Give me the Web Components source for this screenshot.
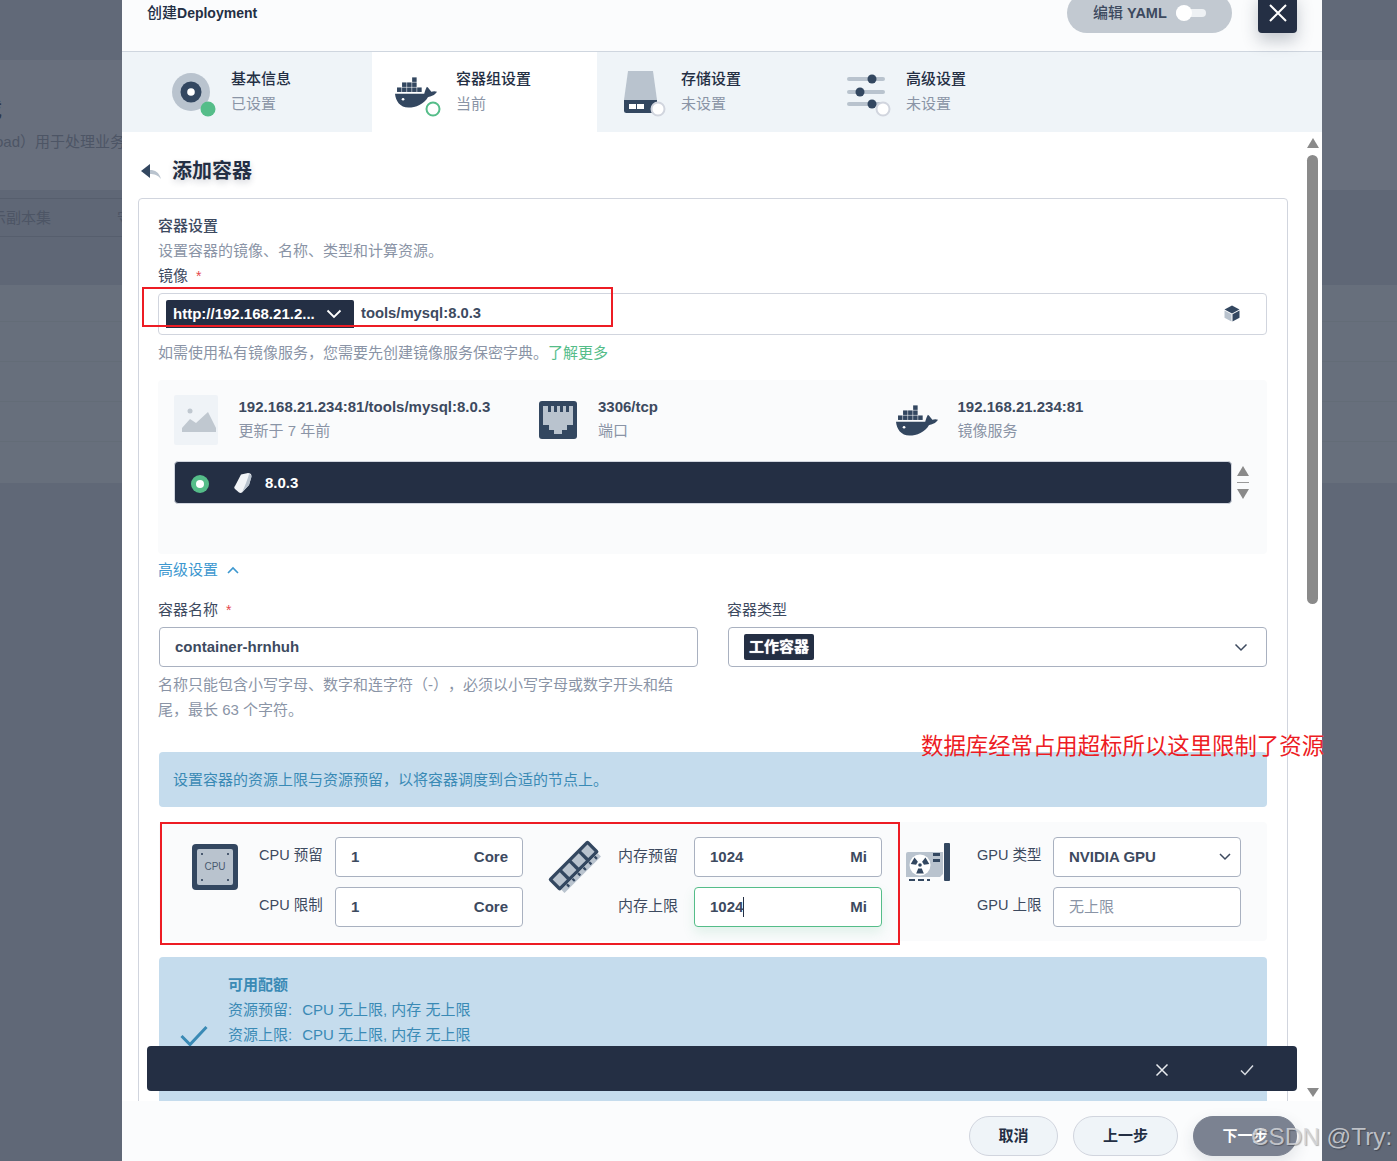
<!DOCTYPE html>
<html lang="zh"><head><meta charset="utf-8"><title>创建Deployment</title>
<style>
html,body{margin:0;padding:0;height:1161px;overflow:hidden;background:#606877}
body{font:15px/20px "Liberation Sans","Noto Sans CJK SC",sans-serif;color:#242f44;text-spacing-trim:space-all}
</style></head><body>
<x-app>
  <x-backdrop slot="left"></x-backdrop>
  <x-modal>
    <x-header slot="header" title="创建Deployment"></x-header>
    <x-steps slot="steps">
      <x-step icon="1" title="基本信息" sub="已设置"></x-step>
      <x-step icon="2" title="容器组设置" sub="当前" active></x-step>
      <x-step icon="3" title="存储设置" sub="未设置"></x-step>
      <x-step icon="4" title="高级设置" sub="未设置"></x-step>
    </x-steps>
    <x-back slot="title">添加容器</x-back>
    <x-card slot="card">
      <x-t k="strong">容器设置</x-t>
      <x-t k="help" style="margin-top:5px">设置容器的镜像、名称、类型和计算资源。</x-t>
      <x-label req style="margin-top:5px">镜像</x-label>
      <x-image-input registry="http://192.168.21.2..." value="tools/mysql:8.0.3" style="margin-top:7px"></x-image-input>
      <x-t k="help" style="margin-top:8px">如需使用私有镜像服务，您需要先创建镜像服务保密字典。<x-link>了解更多</x-link></x-t>
      <x-image-panel style="margin-top:17px"></x-image-panel>
      <x-adv style="margin-top:6px">高级设置</x-adv>
      <x-name-row style="margin-top:20px"></x-name-row>
      <x-notice style="margin-top:30px">设置容器的资源上限与资源预留，以将容器调度到合适的节点上。</x-notice>
      <x-res-panel style="margin-top:15px"></x-res-panel>
      <x-quota style="margin-top:16px"></x-quota>
    </x-card>
    <x-scrollbar slot="scroll"></x-scrollbar>
    <x-footer slot="footer"></x-footer>
    <x-toolbar slot="overlay"></x-toolbar>
  </x-modal>
  <x-note slot="over" style="left:142px;top:287px;width:467px;height:36px"></x-note>
  <x-note slot="over" style="left:160px;top:822px;width:736px;height:119px"></x-note>
  <x-red slot="over">数据库经常占用超标所以这里限制了资源</x-red>
  <x-mark slot="over">CSDN @Try:</x-mark>
</x-app>
<script>
const DARK='#334760',GREY='#b9c3ce',GREEN='#55bd89';
const def=(n,css,html)=>customElements.define(n,class extends HTMLElement{
  connectedCallback(){ if(this.shadowRoot) return;
    this.attachShadow({mode:'open'}).innerHTML=`<style>:host{display:block}${css}</style>`+(typeof html==='function'?html(this):html||'<slot></slot>');}
});
const whale=(x,y,w,h,c=DARK)=>{
  const box=(a,b)=>`<rect x="${a}" y="${b}" width="13.4" height="13.4"/>`;
  return `<svg x="${x}" y="${y}" width="${w}" height="${h}" viewBox="0 0 125 92" style="display:block" aria-hidden="true"><g fill="${c}">${box(51,1)}${box(21,16)}${box(36,16)}${box(51,16)}${box(6,31)}${box(21,31)}${box(36,31)}${box(51,31)}${box(66,31)}<path d="M0 50H87C89 43 91 36 95 29C100 33 105 39 108 44C114 42 120 42 125 44C118 55 107 58 98 60C86 80 62 91 40 91C15 91 2 72 0 50Z"/></g><circle cx="24" cy="66" r="4" fill="#fff"/></svg>`;
};
const badge=(d)=>d==='done'?`<circle cx="41" cy="47" r="7.5" fill="${GREEN}"/>`:d==='cur'?`<circle cx="41" cy="47" r="6.5" fill="#fff" stroke="${GREEN}" stroke-width="2"/>`:`<circle cx="41" cy="47" r="6.5" fill="#fff" stroke="#d1d5de" stroke-width="2"/>`;
const stepIcons={
 1:`<circle cx="24" cy="30" r="19" fill="${GREY}"/><circle cx="24" cy="30" r="10.5" fill="${DARK}"/><circle cx="24" cy="30" r="3.8" fill="#fff"/>`+badge('done'),
 2:whale(3,15,42,31)+badge('cur'),
 3:`<path d="M11 9H36L40 38H7Z" fill="${GREY}"/><path d="M7 38H40V51H9.500Q7 51 7 48.500Z" fill="${DARK}"/><rect x="12" y="42" width="7" height="5" fill="#fff"/><rect x="20" y="42" width="7" height="5" fill="#fff"/>`+badge('off'),
 4:`<g fill="${GREY}"><rect x="5" y="15" width="38" height="4" rx="2"/><rect x="5" y="28" width="38" height="4" rx="2"/><rect x="5" y="40" width="38" height="4" rx="2"/></g><g fill="${DARK}"><circle cx="30" cy="17" r="4.500"/><circle cx="18" cy="30" r="4.500"/><circle cx="30" cy="42" r="4.500"/></g>`+badge('off')
};

def('x-app',`:host{display:grid;grid-template-columns:122px 1200px 75px;height:1161px;position:relative;overflow:hidden;
  background:linear-gradient(#616978 0 60px,#686f7d 60px 190px,#5f6776 190px 285px,#676f7c 285px 321px,#636c77 321px 322px,#676f7c 322px 361px,#636c77 361px 362px,#676f7c 362px 401px,#636c77 401px 402px,#676f7c 402px 441px,#636c77 441px 442px,#676f7c 442px 483px,#606877 483px)}`,
 `<slot name="left"></slot><slot></slot><div></div><slot name="over"></slot>`);
def('x-backdrop',`:host{height:1161px;overflow:hidden;color:#4d5565;white-space:nowrap}
 .big{height:24px;margin:98px 0 0 -20px;font-size:22px;line-height:24px;color:#2e3748;font-weight:500}
 .sub{display:flex;justify-content:flex-end;margin:10px -3px 0 0;height:20px}
 .tabs{margin-top:46px;height:37px;border-top:1px solid #565e6d;border-bottom:1px solid #565e6d;line-height:37px;display:flex;justify-content:space-between;overflow:hidden}
 .tabs span:first-child{margin-left:-9px}.tabs span:last-child{margin-right:-10px}`,
 `<div class="big">载</div><div class="sub"><span>oad）用于处理业务</span></div><div class="tabs"><span>示副本集</span><span>守</span></div>`);
def('x-modal',`:host{width:1200px;height:1161px;display:flex;flex-direction:column;position:relative;background:#fff}
 .body{height:969px;overflow:hidden;display:flex;flex:none}
 .main{width:1150px;padding:0 19px 0 16px;flex:none;overflow:hidden}
 .scroll{padding-top:6px}`,
 `<slot name="header"></slot><slot name="steps"></slot>
 <div class="body"><div class="main"><slot name="title"></slot><slot name="card"></slot></div><div class="scroll"><slot name="scroll"></slot></div></div>
 <slot name="footer"></slot><slot name="overlay"></slot>`);
def('x-header',`:host{height:51px;border-bottom:1px solid #cfd6df;background:#fbfcfd;display:flex;padding:0 25px;box-sizing:content-box;align-items:flex-end;justify-content:space-between;position:relative}
 .t{align-self:flex-start;font-size:14px;font-weight:700;line-height:20px;padding-top:3px;color:#242f44}
 .t b{font-size:15px;font-weight:500}
 .r{display:flex;gap:26px;align-items:flex-end;padding-bottom:18px}
 .y{height:40px;width:165px;box-sizing:border-box;border-radius:20px;background:#c2c9d1;display:flex;align-items:center;padding:0 26px;font-weight:700;font-size:14.500px;color:#3d4a5f;white-space:nowrap;gap:9px}
 .y b{font-size:15px;font-weight:500}
 .tg{width:30px;height:8px;border-radius:4px;background:#eef1f4;position:relative;flex:none}
 .tg::before{content:"";position:absolute;left:0;top:-4px;width:16px;height:16px;border-radius:50%;background:#fff}
 .c{width:39px;height:40px;background:#242f44;border-radius:0 0 4px 4px;display:flex;align-items:center;justify-content:center;box-shadow:0 8px 16px rgba(36,47,68,.25)}
 svg{display:block}`,
 h=>`<div class="t"><b>创建</b>Deployment</div><div class="r"><div class="y"><span><b>编辑</b> YAML</span><span class="tg"></span></div><div class="c"><svg width="18" height="18" viewBox="0 0 18 18"><path d="M1 1L17 17M17 1L1 17" stroke="#fff" stroke-width="2"/></svg></div></div>`);
def('x-steps',`:host{height:80px;background:#eff4f8;padding-left:25px;display:flex}`);
def('x-step',`:host{width:225px;height:80px;display:flex;padding-left:20px;box-sizing:border-box;flex:none}
 :host([active]){background:#fff}
 svg.i{margin-top:10px;flex:none}
 .x{padding:17px 0 0 14px;font-size:15px}
 .a{font-weight:500;line-height:20px;color:#242f44}.b{margin-top:5px;line-height:20px;color:#8a94a6}`,
 h=>`<svg class="i" width="50" height="60" viewBox="0 0 50 60" aria-hidden="true">${stepIcons[h.getAttribute('icon')]}</svg><div class="x"><div class="a">${h.getAttribute('title')}</div><div class="b">${h.getAttribute('sub')}</div></div>`);
def('x-back',`:host{height:66px;display:flex;align-items:center;padding:12px 0 0 3px;box-sizing:border-box;font-size:20px;font-weight:700;color:#242f44;text-shadow:0 3px 6px rgba(36,47,68,.2)}
 svg{margin-right:11px;display:block}`,
 `<svg width="20" height="17" viewBox="0 0 20 17" aria-hidden="true"><path d="M9 7C14 7 18 9 20 16C17 12 13 11 9 11Z" fill="${GREY}"/><path d="M0 8L9 1V15Z" fill="${DARK}"/></svg><slot></slot>`);
def('x-card',`:host{border:1px solid #d1d5de;border-radius:4px;padding:17px 20px 40px 19px;box-sizing:border-box;width:100%}`);
def('x-t',`:host{line-height:20px}:host([k=strong]){font-weight:500;color:#3d4a5f}:host([k=help]){color:#8a94a6}`);
def('x-link',`:host{display:inline;color:#55bd89}`);
def('x-label',`:host{line-height:20px;color:#3d4a5f}i{font-style:normal;color:#e5484d;margin-left:8px;font-size:14px}`,h=>`<slot></slot>${h.hasAttribute('req')?'<i>*</i>':''}`);
def('x-image-input',`:host{height:42px;box-sizing:border-box;border:1px solid #d1d5de;border-radius:4px;display:flex;align-items:flex-start;padding:6px 26px 0 7px;background:#fff}
 .s{width:188px;height:28px;background:#242f44;border-radius:2px 2px 0 0;color:#fff;font-weight:700;font-size:15px;display:flex;align-items:center;justify-content:space-between;padding:0 12px 0 7px;box-sizing:border-box;white-space:nowrap}
 .v{margin-left:7px;height:26px;line-height:26px;font-weight:700;font-size:14.800px;color:#3d4a5f;flex:1}
 svg{display:block;margin-top:5px}`,
 h=>`<div class="s"><span>${h.getAttribute('registry')}</span><svg style="margin:0" width="16" height="10" viewBox="0 0 16 10"><path d="M1.500 1.500L8 8L14.500 1.500" fill="none" stroke="#fff" stroke-width="1.800"/></svg></div><div class="v">${h.getAttribute('value')}</div>
 <svg width="16" height="17" viewBox="0 0 16 17" aria-hidden="true"><path d="M8 .5L15.500 4.500L8 8.500L.5 4.500Z" fill="${DARK}"/><path d="M.5 5.500L7.500 9.300V16.500L.5 12.700Z" fill="${GREY}"/><path d="M15.500 5.500L8.500 9.300V16.500L15.500 12.700Z" fill="${DARK}"/></svg>`);
def('x-image-panel',`:host{height:174px;box-sizing:border-box;background:#fafbfc;border-radius:4px;padding:15px 17px 0 16px}
 .row{display:grid;grid-template-columns:359.5px 359.5px 1fr;height:50px;margin-right:-17px}
 .c{display:flex;align-items:center;height:50px}
 .ic{width:64.500px;flex:none}
 .tx{padding-bottom:2px}
 .a{font-weight:700;font-size:15px;line-height:24px;color:#3d4a5f;white-space:nowrap}.b{line-height:24px;color:#8a94a6}
 .ph{width:44px;height:50px;background:#eff3f7;border-radius:2px;display:flex;align-items:center;justify-content:center}
 .ph svg{margin-left:6px;display:block}
 .bar{margin-top:16px;display:flex;gap:4px}
 .tag{flex:1;height:43px;border:1px solid #d1d5de;box-sizing:border-box;background:#242f44;border-radius:4px;color:#fff;font-weight:700;font-size:15px;display:flex;align-items:center;padding:2px 0 0 16px}
 .r{width:18px;height:18px;border-radius:50%;background:${GREEN};display:flex;align-items:center;justify-content:center;flex:none}
 .r::after{content:"";width:8px;height:8px;border-radius:50%;background:#fff}
 .tag svg{margin:-2px 13px 0 25px;display:block}
 .tag span:last-child{margin-top:-2px}
 .arr{width:14px;height:43px;flex:none;display:flex;flex-direction:column;align-items:center;padding-top:5px;box-sizing:border-box}
 .arr hr{width:12px;height:1px;border:0;background:#999;margin:6px 0}`,
 `<div class="row">
  <div class="c"><div class="ic"><div class="ph"><svg width="34" height="24" viewBox="0 0 34 24"><circle cx="8" cy="3" r="2.500" fill="#c0c8d0"/><path d="M0 24V20L8 11L14 15L26 4L34 20V24Z" fill="#c0c8d0"/></svg></div></div><div class="tx"><div class="a">192.168.21.234:81/tools/mysql:8.0.3</div><div class="b">更新于 7 年前</div></div></div>
  <div class="c"><div class="ic" style="padding-left:5.500px;box-sizing:border-box"><svg style="display:block" width="38" height="38" viewBox="0 0 38 38"><rect width="38" height="38" rx="3" fill="${DARK}"/><path d="M4 5H34V24H28V29H23V33H15V29H10V24H4Z" fill="${GREY}"/><g fill="${DARK}"><rect x="9" y="5" width="3" height="6"/><rect x="15" y="5" width="3" height="6"/><rect x="21" y="5" width="3" height="6"/><rect x="27" y="5" width="3" height="6"/></g></svg></div><div class="tx"><div class="a">3306/tcp</div><div class="b">端口</div></div></div>
  <div class="c"><div class="ic" style="padding-left:3px;box-sizing:border-box">${whale(0,0,42,31)}</div><div class="tx"><div class="a">192.168.21.234:81</div><div class="b">镜像服务</div></div></div>
 </div>
 <div class="bar"><div class="tag"><span class="r"></span><svg width="18" height="20" viewBox="0 0 18 20"><path d="M7 1.500L14 0C16 0 17.500 1 17.500 3L15 12L8 19.500C7 20 6 20 5 19.500L1 16C0 15 0 14 1 13Z" fill="#f2f4f7"/><path d="M15 1C17 2 17.500 3 17.500 4L15 12L8 19.500C10 15 14 6 15 1Z" fill="#b9c3ce"/></svg><span>8.0.3</span></div>
 <div class="arr"><svg width="12" height="10" viewBox="0 0 12 10"><path d="M6 0L12 10H0Z" fill="#8a8a8a"/></svg><hr><svg width="12" height="10" viewBox="0 0 12 10"><path d="M0 0H12L6 10Z" fill="#8a8a8a"/></svg></div></div>`);
def('x-adv',`:host{height:20px;display:flex;align-items:center;color:#3c97cf;gap:8px}`,`<slot></slot><svg width="14" height="8" viewBox="0 0 14 8"><path d="M2 7L7 2L12 7" fill="none" stroke="#3c97cf" stroke-width="1.600"/></svg>`);
def('x-box',`:host{height:40px;box-sizing:border-box;border:1px solid #a9b1c0;border-radius:4px;background:#fff;display:flex;align-items:center;padding:0 14px 0 15px;font-weight:700;font-size:15px;color:#3d4a5f;white-space:nowrap;justify-content:space-between}
 :host([focus]){border-color:${GREEN};box-shadow:0 6px 12px rgba(85,189,137,.15)}
 :host([ph]){font-weight:400;color:#8a94a6;font-size:15px}
 .caret{border-right:1px solid #242f44}`,
 h=>`<span class="${h.hasAttribute('focus')?'caret':''}"><slot></slot></span><slot name="end"></slot>`);
def('x-name-row',`:host{display:grid;grid-template-columns:539px 539px;column-gap:30px;padding-left:1px}
 .l{line-height:20px;margin-left:-1px;color:#3d4a5f}.l i{font-style:normal;color:#e5484d;margin-left:8px;font-size:14px}
 .h{margin:5px 0 0 -1px;color:#8a94a6;line-height:25px;width:530px}
 x-box{margin-top:7px}
 .tag{display:inline-block;background:#242f44;color:#fff;font-weight:700;font-size:15px;padding:0 5px;border-radius:2px;line-height:26px;height:26px;text-shadow:0 0 1px #fff;vertical-align:middle}`,
 `<div><div class="l">容器名称<i>*</i></div><x-box>container-hrnhuh</x-box><div class="h">名称只能包含小写字母、数字和连字符（-），必须以小写字母或数字开头和结尾，最长 63 个字符。</div></div>
 <div><div class="l">容器类型</div><x-box><span class="tag">工作容器</span><svg slot="end" width="14" height="9" viewBox="0 0 14 9" style="display:block;margin-right:4px"><path d="M1.500 1.500L7 7L12.500 1.500" fill="none" stroke="#3d4a5f" stroke-width="1.500"/></svg></x-box></div>`);
def('x-notice',`:host{height:55px;margin-left:1px;box-sizing:border-box;background:#c5dced;border-radius:4px;color:#3a8ab5;padding:0 14px;line-height:55px}`);
const cpu=`<svg width="46" height="46" viewBox="0 0 46 46" aria-hidden="true" style="display:block"><rect width="46" height="46" rx="4" fill="${DARK}"/><rect x="5" y="5" width="36" height="36" rx="2" fill="${GREY}"/><text x="23" y="26" text-anchor="middle" font-size="10" fill="#4a5a70" font-family="Liberation Sans">CPU</text><g fill="#4a5a70"><rect x="9" y="9" width="2" height="2"/><rect x="35" y="9" width="2" height="2"/><rect x="9" y="35" width="2" height="2"/><rect x="35" y="35" width="2" height="2"/></g></svg>`;
const ram=`<svg width="56" height="56" viewBox="0 0 50 50" aria-hidden="true" style="display:block"><g transform="rotate(-45 25 25)"><rect x="0" y="17" width="50" height="15" rx="2" fill="${DARK}"/><g fill="${GREY}"><rect x="3" y="20" width="9" height="9"/><rect x="15" y="20" width="9" height="9"/><rect x="27" y="20" width="9" height="9"/><rect x="39" y="20" width="8" height="9"/></g><rect x="2" y="32" width="46" height="4" fill="${GREY}"/><g fill="${DARK}"><rect x="8" y="32" width="2" height="3"/><rect x="15" y="32" width="2" height="3"/><rect x="22" y="32" width="2" height="3"/><rect x="29" y="32" width="2" height="3"/><rect x="36" y="32" width="2" height="3"/><rect x="43" y="32" width="2" height="3"/></g></g></svg>`;
const wedge=`M13.200 25.500H16.800L18.800 30.500H11.200Z`;
const gpu=`<svg width="45" height="38" viewBox="0 0 45 38" aria-hidden="true" style="display:block"><path d="M3 9H38V31L35 34H1V11Q1 9 3 9Z" fill="${GREY}"/><rect x="39" y="0" width="6" height="38" rx="1" fill="${DARK}"/><circle cx="15" cy="22" r="10.500" fill="#fff"/><g fill="${DARK}"><circle cx="15" cy="22" r="1.800"/><path d="${wedge}"/><path d="${wedge}" transform="rotate(120 15 22)"/><path d="${wedge}" transform="rotate(240 15 22)"/></g><rect x="28" y="10" width="7" height="3" fill="${DARK}"/><rect x="28" y="16" width="7" height="3" fill="${DARK}"/><g fill="${DARK}"><rect x="4" y="36" width="6" height="2"/><rect x="13" y="36" width="6" height="2"/><rect x="22" y="36" width="3" height="2"/></g></svg>`;
def('x-res-panel',`:host{margin-left:1px;height:119px;box-sizing:border-box;background:#fafbfc;border-radius:4px;padding:15px 0 0 15px;display:grid;grid-template-columns:repeat(3,359px)}`,
 ()=>`<x-res-group a="CPU 预留" b="CPU 限制" pt="7" pr="4" fs="14.5"><span slot="icon">${cpu}</span><x-box slot="i1">1<span slot="end">Core</span></x-box><x-box slot="i2">1<span slot="end">Core</span></x-box></x-res-group>
 <x-res-group a="内存预留" b="内存上限" pt="1" pr="4" fs="15"><span slot="icon">${ram}</span><x-box slot="i1">1024<span slot="end">Mi</span></x-box><x-box slot="i2" focus>1024<span slot="end">Mi</span></x-box></x-res-group>
 <x-res-group a="GPU 类型" b="GPU 上限" pt="6" pr="14" fs="14.5"><span slot="icon">${gpu}</span><x-box slot="i1">NVIDIA GPU<svg slot="end" width="12" height="8" viewBox="0 0 12 8" style="display:block;margin-right:-5px"><path d="M1 1L6 6L11 1" fill="none" stroke="#3d4a5f" stroke-width="1.500"/></svg></x-box><x-box slot="i2" ph>无上限</x-box></x-res-group>`);
def('x-res-group',`:host{display:grid;grid-template-columns:85px 76px 188px;grid-template-rows:40px 40px;row-gap:10px;width:349px}
 .ic{grid-row:1/3;display:flex;justify-content:center;box-sizing:border-box}
 .l{line-height:37px;color:#3d4a5f;white-space:nowrap}`,
 h=>`<div class="ic" style="padding-top:${h.getAttribute('pt')||0}px;padding-right:${h.getAttribute('pr')||0}px"><slot name="icon"></slot></div>
 <div class="l" style="font-size:${h.getAttribute('fs')}px">${h.getAttribute('a')}</div><div><slot name="i1"></slot></div><div class="l" style="font-size:${h.getAttribute('fs')}px">${h.getAttribute('b')}</div><div><slot name="i2"></slot></div>`);
def('x-quota',`:host{margin-left:1px;height:170px;box-sizing:border-box;background:#c5dced;border-radius:4px;color:#3a8ab5;display:flex;padding:15px 0 0 21px;line-height:25px}
 svg{display:block;margin:53px 20px 0 0;flex:none}
 b{font-weight:700;font-size:15px;display:block;line-height:25px}
 span{margin-left:10px}`,
 `<svg width="28" height="22" viewBox="0 0 28 22"><path d="M1.500 11L10 19.500L26.500 2" fill="none" stroke="#3a8ab5" stroke-width="3"/></svg><div><b>可用配额</b><div>资源预留:<span>CPU 无上限, 内存 无上限</span></div><div>资源上限:<span>CPU 无上限, 内存 无上限</span></div></div>`);
def('x-scrollbar',`:host{width:11px;display:flex;flex-direction:column;align-items:center;height:963px}
 .t{width:11px;height:449px;margin-top:7px;background:#8a8a8a;border-radius:6px;flex:none}
 svg{display:block;flex:none}.d{margin-top:auto;margin-bottom:4px}`,
 `<svg width="12" height="10" viewBox="0 0 12 10"><path d="M6 0L12 10H0Z" fill="#8a8a8a"/></svg><div class="t"></div><svg class="d" width="12" height="9" viewBox="0 0 12 9"><path d="M0 0H12L6 9Z" fill="#8a8a8a"/></svg>`);
def('x-footer',`:host{height:60px;background:#fbfcfd;display:flex;justify-content:flex-end;align-items:flex-start;gap:15px;padding:15px 25px 0;box-sizing:border-box}
 div{height:40px;box-sizing:border-box;border:1px solid #d1d5de;border-radius:20px;background:#eff4f8;font-weight:700;font-size:15px;line-height:38px;text-align:center;color:#242f44}
 .n{background:#7b8291;color:#fff;border-color:#7b8291;box-shadow:0 6px 16px rgba(36,47,68,.12)}`,
 `<div style="width:89px">取消</div><div style="width:105px">上一步</div><div class="n" style="width:104px">下一步</div>`);
def('x-toolbar',`:host{position:absolute;left:25px;right:25px;bottom:70px;height:45px;background:#242f44;border-radius:4px;display:flex;justify-content:flex-end;align-items:center;padding:3px 42px 0 0;box-sizing:border-box;gap:70px}
 svg{display:block}`,
 `<svg width="14" height="14" viewBox="0 0 14 14"><path d="M1.500 1.500L12.500 12.500M12.500 1.500L1.500 12.500" stroke="#e8ebef" stroke-width="1.500"/></svg><svg width="16" height="12" viewBox="0 0 16 12"><path d="M2 6.500L6 10.500L14 1.500" fill="none" stroke="#d8dce2" stroke-width="1.500"/></svg>`);
def('x-note',`:host{position:absolute;border:2px solid #ed1c24}`,' ');
def('x-red',`:host{position:absolute;left:921px;top:732px;font-size:22.400px;line-height:30px;color:#ed1c24;white-space:nowrap}`);
def('x-mark',`:host{position:absolute;left:1251px;top:1123px;font:24.300px/28px "Liberation Sans",sans-serif;color:rgba(214,216,220,.82);text-shadow:1px 1px 1px rgba(0,0,0,.3);white-space:nowrap}`);
</script>
</body></html>
